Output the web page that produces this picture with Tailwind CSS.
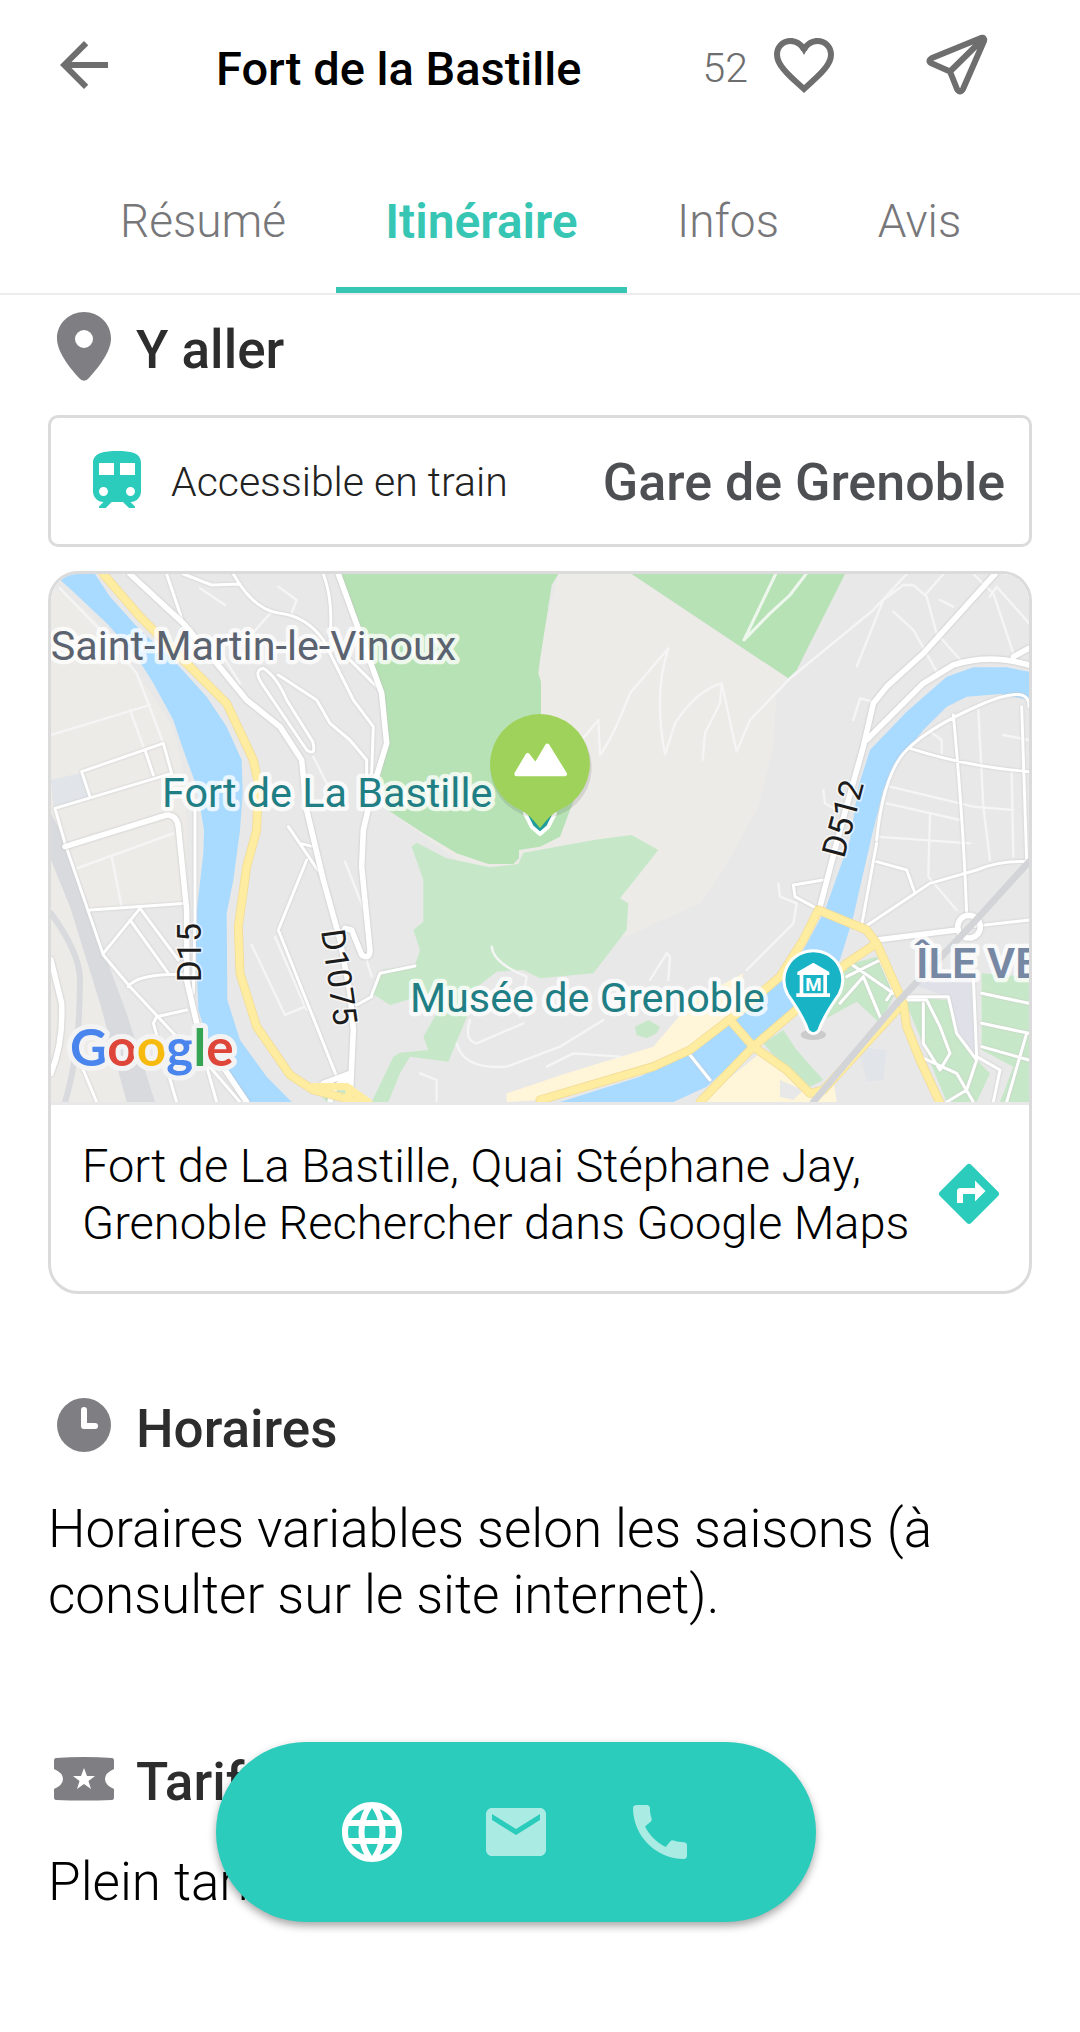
<!DOCTYPE html>
<html lang="fr">
<head>
    <meta charset="UTF-8">
    <meta name="viewport" content="width=device-width, initial-scale=1.0">
    <title>Fort de la Bastille - Itinéraire</title>
    <script src="https://cdn.jsdelivr.net/npm/@tailwindcss/browser@4"></script>
</head>
<body class="bg-white text-black font-['Roboto',sans-serif]">
    <!-- Top bar -->
    <header class="flex h-[130px] items-center px-12 text-[#6e6e6e]">
        <button type="button" aria-label="Retour">
            <svg class="size-[72px]" viewBox="0 0 24 24" fill="currentColor"><path d="M20 11H7.83l5.59-5.59L12 4l-8 8 8 8 1.41-1.41L7.83 13H20v-2z"/></svg>
        </button>
        <h1 class="ml-24 grow text-[47px] font-medium text-black pt-2">Fort de la Bastille</h1>
        <button type="button" class="flex items-center gap-5" aria-label="52 favoris">
            <span class="text-[41px] font-[350] pt-2">52</span>
            <svg class="size-[72px]" viewBox="0 0 24 24" fill="currentColor"><path d="M16.5 3c-1.74 0-3.41.81-4.5 2.09C10.91 3.81 9.24 3 7.5 3 4.42 3 2 5.42 2 8.5c0 3.78 3.4 6.86 8.55 11.54L12 21.35l1.45-1.32C18.6 15.36 22 12.28 22 8.5 22 5.42 19.58 3 16.5 3zm-4.4 15.55l-.1.1-.1-.1C7.14 14.24 4 11.39 4 8.5 4 6.5 5.5 5 7.5 5c1.54 0 3.04.99 3.57 2.36h1.87C13.46 5.99 14.96 5 16.5 5c2 0 3.5 1.5 3.5 3.5 0 2.89-3.14 5.74-7.9 10.05z"/><path d="M10.8 6.5L12 8.7l1.2-2.2L12 5z"/></svg>
        </button>
        <button type="button" class="ml-20 mr-10" aria-label="Partager">
            <svg class="size-[72px]" viewBox="0 0 72 72" fill="none" stroke="currentColor" stroke-width="6" stroke-linejoin="round" stroke-linecap="round"><path d="M61 9L12 29Q7 32 12 34.500L30 42.500L37 60Q40 65 43 60L64 12Q65 8 61 9zM30 42.500L62 11"/></svg>
        </button>
    </header>

    <!-- Tabs -->
    <nav class="grid grid-cols-[266fr_291fr_202fr_181fr] border-b-2 border-[#ececec] px-[70px] pt-4 text-center text-[46px] font-[350] text-[#77777a]">
        <a href="#" class="h-[147px] border-b-[6px] border-transparent leading-[151px]">Résumé</a>
        <a href="#" class="h-[147px] border-b-[6px] border-[#38c6b4] text-[48px] leading-[151px] font-semibold text-[#38c6b4]" aria-current="page">Itinéraire</a>
        <a href="#" class="h-[147px] border-b-[6px] border-transparent leading-[151px]">Infos</a>
        <a href="#" class="h-[147px] border-b-[6px] border-transparent leading-[151px]">Avis</a>
    </nav>

    <main class="px-12 pb-[118px]">
        <section>
            <div class="mt-4 flex h-[72px] items-center gap-4">
                <svg class="size-[72px] text-[#7f7e83]" viewBox="0 0 72 72" fill="currentColor" fill-rule="evenodd"><path d="M36 1C21 1 9 12.500 9 27.500C9 41 22 57 31 67Q36 72.500 41 67C50 57 63 41 63 27.500C63 12.500 51 1 36 1zM36 19a9 9 0 1 0 0 18a9 9 0 0 0 0-18z"/></svg>
                <h2 class="pt-2 text-[53px] font-medium text-[#2d2d2d]">Y aller</h2>
            </div>

            <div class="mt-8 flex h-[132px] items-center rounded-[10px] border-[3px] border-[#dbdbdb] pl-[30px] pr-6">
                <svg class="size-[72px] text-[#2bccbb]" viewBox="0 0 24 24" fill="currentColor"><path d="M12 2c-4 0-8 .5-8 4v9.500C4 17.430 5.570 19 7.500 19L6 20.500v.5h2.230l2-2H14l2 2h2v-.5L16.500 19c1.930 0 3.500-1.570 3.500-3.500V6c0-3.500-3.580-4-8-4zM7.500 17c-.83 0-1.500-.67-1.500-1.500S6.670 14 7.500 14s1.500.67 1.500 1.500S8.330 17 7.500 17zm3.500-7H6V6h5v4zm2 0V6h5v4h-5zm3.500 7c-.83 0-1.500-.67-1.500-1.500s.67-1.500 1.500-1.500 1.500.67 1.500 1.500-.67 1.500-1.500 1.500z"/></svg>
                <p class="ml-[18px] grow pt-1 text-[41px] font-[350] text-[#222222]">Accessible en train</p>
                <p class="pt-1 text-[52px] font-medium text-[#4e4f53]">Gare de Grenoble</p>
            </div>

            <div class="mt-6 overflow-hidden rounded-[30px] border-[3px] border-[#dbdbdb]">
                <svg class="block w-full" viewBox="33 42 2934 1584" fill="none" stroke-linejoin="round" stroke-linecap="round" font-family="Roboto, sans-serif">
                    <rect x="33" y="42" width="2934" height="1584" fill="#e8e8e8"/>
                    <!-- Built-up and open ground -->
                    <g fill="#ecebe8">
                        <path d="M33 75L150 160L300 350L400 500L440 680V1030L150 1050L200 1250L280 1460L340 1626H33z"/>
                        <path d="M1555 42H1775L2245 350L2210 400L2200 560L2155 740L2050 930L1980 1030L1760 1130L1500 1100L1250 900L1035 745L1500 700L1490 300z"/>
                    </g>
                    <path d="M33 660L120 640L148 710L40 740z" fill="#e1e4e9"/>
                    <path d="M33 760L80 850L150 1050L200 1200L260 1360L345 1626H260L180 1330L90 1040L33 900z" fill="#d8dade"/>
                    <path d="M33 1060Q120 1180 120 1260Q120 1480 75 1626" stroke="#d8dade" stroke-width="18"/>
                    <!-- Forest and parks -->
                    <g fill="#b7e2b5">
                        <path d="M905 42H1555L1535 75L1500 300L1495 340L1503 365V470L1605 710L1560 830L1500 860L1437 870V895L1420 912H1345L1250 880L1150 820L1035 745L1020 650L1045 550L1030 400L960 220z"/>
                        <path d="M1775 42H2415L2270 330L2245 355z"/>
                    </g>
                    <g fill="#c7e8c8">
                        <path d="M1115 860L1130 848L1220 895L1350 922L1435 912L1450 878L1675 838L1775 825L1855 870L1800 940L1740 1015L1765 1030L1760 1110L1710 1175L1660 1240L1500 1255L1450 1230L1370 1235L1300 1290L1285 1360L1225 1505L1110 1490L1080 1540L1045 1626H995L1060 1490L1080 1478L1165 1470L1150 1430L1190 1360L1170 1300L1050 1335L995 1300L1030 1230L1125 1215L1140 1170L1120 1110L1150 1085V960z"/>
                        <path d="M1785 1400L1825 1380L1860 1400L1850 1420L1820 1435L1790 1425z"/>
                        <path d="M2355 1330L2400 1220L2510 1190L2565 1300L2520 1390L2450 1325L2360 1375z"/>
                        <path d="M2170 1450L2230 1410L2270 1470L2350 1560L2290 1590z"/>
                        <path d="M2590 1310L2720 1320L2750 1400L2800 1490L2850 1540L2810 1626H2720L2640 1430z"/>
                        <path d="M2825 1240L2967 1250V1626H2880L2920 1520L2825 1470z"/>
                        <path d="M820 1580L930 1570L940 1610L860 1626z"/>
                    </g>
                    <path d="M2610 1270L2790 1240L2810 1490L2760 1440L2720 1310z" fill="#e0e1e8"/>
                    <path d="M2455 1460L2540 1470L2530 1560L2480 1565z" fill="#e1e4e9"/>
                    <g fill="#fff5d8">
                        <path d="M1400 1600L1580 1540L1840 1460L1900 1390L1960 1320L2110 1240L2080 1380L1950 1470L1500 1620L1400 1626z"/>
                        <path d="M1980 1626L2160 1480L2310 1600L2380 1560L2390 1626z"/>
                    </g>
                    <path d="M2220 1560L2290 1590L2260 1620L2220 1610z" fill="#e8e8e8"/>
                    <!-- Isère -->
                    <g fill="#a9daff">
                        <path d="M40 42H165L210 110L300 210L400 300L500 410L560 500L605 600L608 700L600 810L580 960L560 1060L562 1320L600 1440L680 1550L755 1626H625L520 1490L475 1350L465 1100L490 880L492 810L470 680L430 570L400 480L340 370L290 290L200 190L100 95L55 55z"/>
                        <path d="M2967 335L2900 322H2800L2720 350L2600 455L2490 570L2455 680L2430 840L2387 960L2355 1050L2290 1170L2200 1270L2090 1375L1960 1470L1800 1550L1560 1626H1900L2000 1580L2130 1460L2250 1350L2400 1200L2440 1070L2465 960L2495 830L2530 690L2580 600L2650 510L2720 440L2780 410L2880 402L2967 420z"/>
                    </g>
                    <!-- Footpaths and lanes -->
                    <g stroke="#f5f5f5" stroke-width="7">
                        <path d="M480 85L555 135M715 80L770 120L755 160M695 155L620 240M550 290L600 370M33 525L330 435M60 85L200 230L290 340L340 470L370 550M270 450L310 560M855 470L980 600M820 590L860 670M110 925L400 820M215 890L245 1040M635 1155L735 1365L795 1340M915 905L980 1070M980 1200L995 1250M705 1130L800 1350"/>
                        <path d="M1575 600L1675 480L1680 585Q1720 530 1770 400L1885 265Q1840 400 1875 583L1905 490Q1970 390 2045 370L2090 575L2130 480L2250 355L2500 150L2600 42M2045 370L2040 430L1995 520L1988 600M2450 320L2530 120L2590 75L2620 75L2660 110L2690 220L2770 310M2560 155L2620 210L2690 335M2655 105L2710 42M2700 120L2740 140M2800 42L2860 100L2920 280M2850 110L2870 80L2967 190M2440 480L2460 415L2500 425M2350 690L2355 730L2390 750"/>
                        <path d="M2550 680L2800 740L2920 750M2540 730L2760 780M2670 760L2665 950L2750 1050M2815 450L2830 740L2850 900M2915 630L2920 890M2670 515L2705 540V580M2890 525L2967 540M2510 830L2790 850"/>
                        <path d="M2215 970L2220 1010L2270 1030L2260 1090L2120 1230M1830 1260L1880 1180L1890 1190L1885 1260M1355 1160Q1360 1210 1460 1250L1440 1370M1290 1380Q1270 1440 1310 1450L1450 1390M1250 1450Q1270 1530 1400 1520L1560 1460L1690 1380M1520 1520L1600 1480L1740 1490M1190 1626V1560L1140 1540"/>
                    </g>
                    <!-- Streets -->
                    <g class="[filter:drop-shadow(0_0_3px_#c8c8c8)]" stroke="#ffffff" stroke-width="9">
                        <path d="M380 42L430 190M430 42L515 75L600 72M580 42Q640 150 720 160T850 240L880 300L940 420L1000 500L995 640M850 42Q880 120 870 230M870 240L1010 380M670 325Q640 330 665 370L800 570Q830 590 818 545L740 420Q710 350 670 325M715 345L830 420L870 490L930 540L980 600V650M125 635L370 550L395 640L45 745L75 850M125 635L150 710M315 570L340 645"/>
                        <path d="M75 850L190 1185L270 1280L400 1420L500 1510L600 1626M150 1050L440 1030M190 1180L300 1045L415 1200M270 1080L385 1240M265 1280Q290 1240 440 1243M440 1350L350 1370L340 1390L410 1626M465 750L465 1080L460 1300M800 900L715 1110L890 1550M745 800L840 940M780 850L820 860M950 1335L995 1310M995 1305L1020 1240L1125 1218M130 1530L170 1626M500 1520L530 1626"/>
                        <path d="M2610 565Q2780 620 2967 635M2510 840Q2530 640 2600 570T2820 435T2967 440M2740 465Q2770 780 2780 1060M2945 440L2960 900M2465 1095L2510 850M2475 1100L2670 970L2810 930Q2880 900 2967 905M2510 905L2600 930L2625 1000M2790 1100L2967 1080M2265 1010L2260 975L2350 960M2265 1010L2330 1045M1950 1485L2010 1560"/>
                        <path d="M2420 1250L2520 1200L2560 1290L2540 1320M2430 1210L2560 1300M2400 1330L2470 1250L2520 1370M2590 1320L2660 1320L2700 1400L2730 1480L2700 1530L2650 1450V1330M2600 1310L2725 1310L2750 1420L2810 1500L2780 1590L2720 1626M2800 1250L2810 1490L2880 1530L2860 1626M2825 1300L2967 1330M2825 1390L2967 1420M2825 1460L2967 1500M2960 1420L2900 1626M2640 1490L2750 1540L2800 1626"/>
                    </g>
                    <path d="M2207 42L2112 240L2190 160L2250 105L2298 42" stroke="#eef7ed" stroke-width="9"/>
                    <g class="[filter:drop-shadow(0_0_3px_#bdbdbd)]" stroke="#ffffff" stroke-width="17">
                        <path d="M270 42L430 190L530 310L620 420L720 500L785 600L800 750L850 960L900 1140L930 1300L940 1410L930 1626M895 42L960 220L1025 400L1040 550L1000 680L970 810L965 920L990 1170Q990 1200 965 1185L935 1110L915 1105M75 860L380 765Q410 765 415 800L440 1050V1260L475 1410L620 1626M33 1200L65 1330Q70 1450 33 1540M850 1570L930 1540M870 1626Q880 1570 920 1560"/>
                        <path d="M2865 42L2650 280L2540 380L2500 430L2470 560L2400 810L2340 1040M2480 540L2650 370L2740 315Q2850 280 2967 315M2920 290L2967 265M2510 1140L2750 1110"/>
                        <circle cx="2787" cy="1100" r="34"/>
                    </g>
                    <!-- Main roads: casing, then fill -->
                    <g stroke="#f2dc98" stroke-width="27">
                        <path d="M190 42L300 170L420 290L560 430L640 600L655 670L650 810L620 920L595 1100L600 1240L650 1400L750 1545L820 1590L960 1626"/>
                        <path d="M1500 1620L1840 1520L1950 1470L2080 1370L2220 1250L2290 1140L2335 1050L2480 1110L2510 1150L2590 1330L2600 1400L2640 1500L2705 1640M1980 1626L2140 1460L2280 1340L2420 1210L2510 1150M2070 1380L2140 1460L2240 1530L2310 1600L2350 1590L2570 1350"/>
                    </g>
                    <g stroke="#feeda0" stroke-width="22">
                        <path d="M190 42L300 170L420 290L560 430L640 600L655 670L650 810L620 920L595 1100L600 1240L650 1400L750 1545L820 1590L960 1626M820 1580H920L985 1626M930 1585L920 1626"/>
                        <path d="M1500 1620L1840 1520L1950 1470L2080 1370L2220 1250L2290 1140L2335 1050L2480 1110L2510 1150L2590 1330L2600 1400L2640 1500L2705 1640M1980 1626L2140 1460L2280 1340L2420 1210L2510 1150M2070 1380L2140 1460L2240 1530L2310 1600L2350 1590L2570 1350"/>
                    </g>
                    <path d="M2320 1626L2570 1330L2790 1100L2967 905" stroke="#d2d4d7" stroke-width="20"/>

                    <!-- Place names -->
                    <g font-size="124" stroke="#ffffff" stroke-opacity="0.75" stroke-width="26" paint-order="stroke">
                        <text x="32" y="300" fill="#5b6370">Saint-Martin-le-Vinoux</text>
                        <text x="366" y="742" fill="#1f7f85">Fort de La Bastille</text>
                        <text x="1110" y="1355" fill="#1f7f85">Musée de Grenoble</text>
                        <text x="2628" y="1253" font-size="130" fill="#7688a3" font-weight="600">ÎLE VERTE</text>
                    </g>
                    <g font-size="100" fill="#1c1c1c" stroke="#ffffff" stroke-opacity="0.6" stroke-width="10" paint-order="stroke">
                        <text transform="translate(483 1267) rotate(-90)">D15</text>
                        <text transform="translate(843 1112) rotate(82)">D1075</text>
                        <text transform="translate(2412 898) rotate(-75)">D512</text>
                    </g>

                    <!-- Fort marker -->
                    <path d="M1475 800L1500 822L1525 800L1545 760H1455z" fill="#1f9c9c" stroke="#ffffff" stroke-width="12"/>
                    <circle cx="1503" cy="622" r="152" fill="#000000" fill-opacity="0.1"/>
                    <path d="M1500 462A150 150 0 0 1 1556 751Q1530 765 1500 805Q1470 765 1444 751A150 150 0 0 1 1500 462z" fill="#9fd25a"/>
                    <path d="M1430 642L1463 586L1487 617L1522 558L1574 642z" fill="#ffffff" stroke="#ffffff" stroke-width="14"/>

                    <!-- Museum marker -->
                    <ellipse cx="2320" cy="1424" rx="38" ry="16" fill="#000000" fill-opacity="0.12"/>
                    <path d="M2320 1172A88 88 0 0 1 2397 1303Q2350 1370 2336 1412Q2320 1430 2304 1412Q2290 1370 2243 1303A88 88 0 0 1 2320 1172z" fill="#19b3c6" stroke="#ffffff" stroke-width="9"/>
                    <path d="M2320 1208L2368 1236V1245H2272V1236zM2269 1300H2370V1311H2269zM2279 1243H2290V1302H2279zM2350 1243H2361V1302H2350z" fill="#ffffff"/>
                    <text x="2320" y="1293" text-anchor="middle" font-size="56" font-weight="700" fill="#ffffff">M</text>

                    <!-- Google wordmark -->
                    <text x="90" y="1518" font-family="Lato, sans-serif" font-size="154" font-weight="700" stroke="#f3f3f3" stroke-width="30" paint-order="stroke"><tspan fill="#4a85ee">G</tspan><tspan fill="#df463a">o</tspan><tspan fill="#f7bb10">o</tspan><tspan fill="#4a85ee">g</tspan><tspan fill="#35a554">l</tspan><tspan fill="#df463a">e</tspan></text>
                </svg>
                <div class="flex items-center border-t-[3px] border-[#e8e8e8] pb-10 pl-[31px] pr-6 pt-8">
                    <p class="grow text-[47px] font-[350] leading-[57px]">Fort de La Bastille, Quai Stéphane Jay,<br>Grenoble Rechercher dans Google Maps</p>
                    <a href="#" class="shrink-0" aria-label="Ouvrir l'itinéraire">
                        <svg class="size-[72px] text-[#2bccbb]" viewBox="0 0 24 24" fill="currentColor"><path d="M21.710 11.290l-9-9a.996.996 0 0 0-1.410 0l-9 9a.996.996 0 0 0 0 1.410l9 9c.39.39 1.020.39 1.410 0l9-9a.996.996 0 0 0 0-1.410zM14 14.500V12h-4v3H8v-4c0-.55.45-1 1-1h5V7.500l3.500 3.500-3.500 3.500z"/></svg>
                    </a>
                </div>
            </div>
        </section>

        <section class="mt-24">
            <div class="flex h-[72px] items-center gap-4">
                <svg class="size-[72px] text-[#7f7e83]" viewBox="0 0 72 72"><circle cx="36" cy="35" r="27" fill="currentColor"/><path d="M36 20V36H47" fill="none" stroke="#ffffff" stroke-width="6" stroke-linecap="round" stroke-linejoin="round"/></svg>
                <h2 class="pt-2 text-[53px] font-medium text-[#2d2d2d]">Horaires</h2>
            </div>
            <p class="mt-[34px] text-[53px] font-[350] leading-[66px]">Horaires variables selon les saisons (à consulter sur le site internet).</p>
        </section>

        <section class="mt-[115px]">
            <div class="flex h-[72px] items-center gap-4">
                <svg class="size-[72px] text-[#7f7e83]" viewBox="0 0 72 72" fill="currentColor" fill-rule="evenodd"><path d="M8 15Q36 13 64 15Q66 15 66 18V26Q57 30 57 36T66 46V54Q66 57 64 57Q36 58 8 57Q6 57 6 54V46Q15 42 15 36T6 26V18Q6 15 8 15zM36 25L33 33H25L31.500 38L29 46L36 41L43 46L40.500 38L47 33H39z"/></svg>
                <h2 class="pt-2 text-[53px] font-medium text-[#2d2d2d]">Tarifs</h2>
            </div>
            <p class="mt-[34px] text-[53px] font-[350] leading-[66px]">Plein tarif</p>
        </section>
    </main>

    <!-- Contact shortcuts -->
    <div class="fixed bottom-[110px] left-1/5 flex h-[180px] w-[600px] items-center justify-center gap-[72px] rounded-full bg-[#2bccbb] text-white shadow-[0_4px_8px_rgba(0,0,0,0.35)]">
        <button type="button" aria-label="Site internet">
            <svg class="size-[72px]" viewBox="0 0 24 24" fill="currentColor"><path d="M11.990 2C6.470 2 2 6.480 2 12s4.470 10 9.990 10C17.520 22 22 17.520 22 12S17.520 2 11.990 2zm6.930 6h-2.950c-.32-1.250-.78-2.450-1.380-3.560 1.840.63 3.370 1.910 4.330 3.560zM12 4.040c.83 1.200 1.480 2.530 1.910 3.960h-3.820c.43-1.430 1.080-2.760 1.910-3.960zM4.260 14C4.100 13.360 4 12.690 4 12s.1-1.360.26-2h3.380c-.08.66-.14 1.320-.14 2s.06 1.340.14 2H4.260zm.82 2h2.950c.32 1.250.78 2.450 1.380 3.560-1.840-.63-3.370-1.900-4.330-3.560zm2.950-8H5.080c.96-1.660 2.490-2.930 4.330-3.560C8.810 5.550 8.350 6.750 8.030 8zM12 19.960c-.83-1.200-1.480-2.530-1.910-3.960h3.820c-.43 1.430-1.080 2.760-1.910 3.960zM14.340 14H9.660c-.09-.66-.16-1.320-.16-2s.07-1.350.16-2h4.680c.09.65.16 1.320.16 2s-.07 1.340-.16 2zm.25 5.560c.6-1.110 1.060-2.310 1.380-3.560h2.950c-.96 1.650-2.490 2.930-4.330 3.560zM16.360 14c.08-.66.14-1.320.14-2s-.06-1.340-.14-2h3.380c.16.64.26 1.310.26 2s-.1 1.360-.26 2h-3.380z"/></svg>
        </button>
        <button type="button" class="text-white/60" aria-label="E-mail">
            <svg class="size-[72px]" viewBox="0 0 24 24" fill="currentColor"><path d="M20 4H4c-1.100 0-1.990.9-1.990 2L2 18c0 1.100.9 2 2 2h16c1.100 0 2-.9 2-2V6c0-1.100-.9-2-2-2zm0 4l-8 5-8-5V6l8 5 8-5v2z"/></svg>
        </button>
        <button type="button" class="text-white/60" aria-label="Téléphone">
            <svg class="size-[72px]" viewBox="0 0 24 24" fill="currentColor"><path d="M20.010 15.380c-1.230 0-2.420-.2-3.530-.56-.35-.12-.74-.03-1.010.24l-1.570 1.970c-2.830-1.350-5.480-3.900-6.890-6.830l1.950-1.660c.27-.28.35-.67.24-1.020-.37-1.110-.56-2.300-.56-3.530 0-.54-.45-.99-.99-.99H4.190C3.650 3 3 3.240 3 3.990 3 13.280 10.730 21 20.010 21c.71 0 .99-.63.99-1.180v-3.450c0-.54-.45-.99-.99-.99z"/></svg>
        </button>
    </div>
</body>
</html>
